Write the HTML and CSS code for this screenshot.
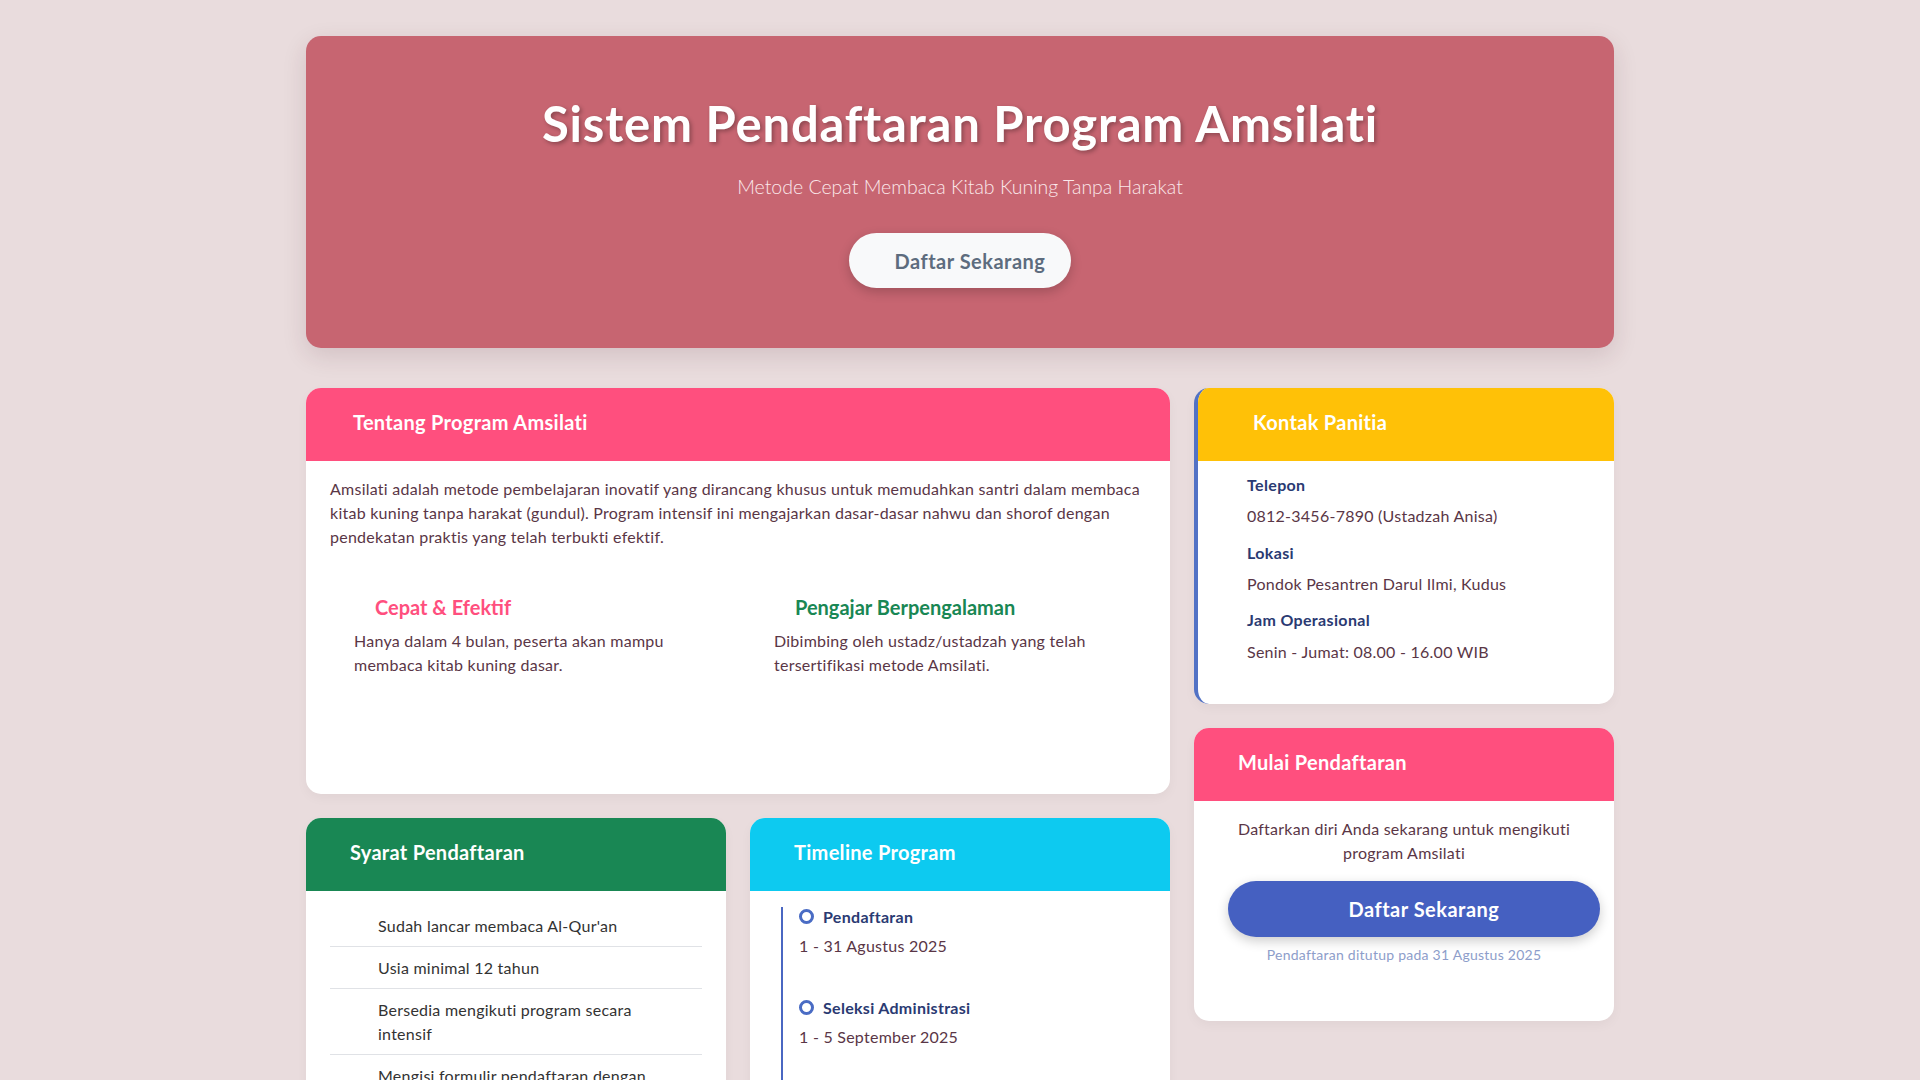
FILE: index.html
```html
<!DOCTYPE html>
<html lang="id">
<head>
<meta charset="utf-8">
<title>Sistem Pendaftaran Program Amsilati</title>
<link rel="stylesheet" href="styles.css">
</head>
<body>
<div class="page">
  <header class="hero">
    <h1 class="hero-title">Sistem Pendaftaran Program Amsilati</h1>
    <p class="hero-lead">Metode Cepat Membaca Kitab Kuning Tanpa Harakat</p>
    <a class="hero-btn" href="#daftar">Daftar Sekarang</a>
  </header>

  <main class="layout">
    <div class="col">
      <section class="card about">
        <h2 class="card-head head-pink head-about">Tentang Program Amsilati</h2>
        <div class="about-body">
          <p class="about-text">Amsilati adalah metode pembelajaran inovatif yang dirancang khusus untuk memudahkan santri dalam membaca kitab kuning tanpa harakat (gundul). Program intensif ini mengajarkan dasar-dasar nahwu dan shorof dengan pendekatan praktis yang telah terbukti efektif.</p>
          <div class="features">
            <div class="feature">
              <h3 class="feature-title pink">Cepat &amp; Efektif</h3>
              <p class="feature-text">Hanya dalam 4 bulan, peserta akan mampu membaca kitab kuning dasar.</p>
            </div>
            <div class="feature">
              <h3 class="feature-title green">Pengajar Berpengalaman</h3>
              <p class="feature-text">Dibimbing oleh ustadz/ustadzah yang telah tersertifikasi metode Amsilati.</p>
            </div>
          </div>
        </div>
      </section>

      <div class="pair">
        <section class="card">
          <h2 class="card-head head-green head-std">Syarat Pendaftaran</h2>
          <ul class="req-list">
            <li>Sudah lancar membaca Al-Qur'an</li>
            <li>Usia minimal 12 tahun</li>
            <li>Bersedia mengikuti program secara intensif</li>
            <li>Mengisi formulir pendaftaran dengan lengkap</li>
            <li>Membayar biaya pendaftaran</li>
          </ul>
        </section>
        <section class="card">
          <h2 class="card-head head-cyan head-std">Timeline Program</h2>
          <div class="tl-body">
            <ol class="timeline">
              <li class="tl-item">
                <div class="tl-title"><span class="tl-dot"></span>Pendaftaran</div>
                <div class="tl-date">1 - 31 Agustus 2025</div>
              </li>
              <li class="tl-item">
                <div class="tl-title"><span class="tl-dot"></span>Seleksi Administrasi</div>
                <div class="tl-date">1 - 5 September 2025</div>
              </li>
              <li class="tl-item">
                <div class="tl-title"><span class="tl-dot"></span>Pelaksanaan Program</div>
                <div class="tl-date">8 September - 31 Desember 2025</div>
              </li>
            </ol>
          </div>
        </section>
      </div>
    </div>

    <aside class="col">
      <section class="card contact">
        <h2 class="card-head head-yellow head-contact">Kontak Panitia</h2>
        <div class="contact-body">
          <div class="contact-item">
            <div class="contact-label">Telepon</div>
            <div class="contact-value">0812-3456-7890 (Ustadzah Anisa)</div>
          </div>
          <div class="contact-item">
            <div class="contact-label">Lokasi</div>
            <div class="contact-value">Pondok Pesantren Darul Ilmi, Kudus</div>
          </div>
          <div class="contact-item">
            <div class="contact-label">Jam Operasional</div>
            <div class="contact-value">Senin - Jumat: 08.00 - 16.00 WIB</div>
          </div>
        </div>
      </section>

      <section class="card" id="daftar">
        <h2 class="card-head head-pink head-std">Mulai Pendaftaran</h2>
        <div class="reg-body">
          <p class="reg-text">Daftarkan diri Anda sekarang untuk mengikuti program Amsilati</p>
          <a class="reg-btn" href="#daftar">Daftar Sekarang</a>
          <p class="reg-note">Pendaftaran ditutup pada 31 Agustus 2025</p>
        </div>
      </section>
    </aside>
  </main>
</div>
</body>
</html>
```

FILE: styles.css
```css
* { box-sizing: border-box; }

body {
  margin: 0;
  background: #e9dcdd;
  font-family: "Lato", sans-serif;
  font-size: 16px;
  line-height: 1.5;
  letter-spacing: 0.25px;
  color: #5a3646;
}

.page {
  width: 1308px;
  margin: 0 auto;
  padding: 36px 0 60px;
}

/* Hero */
.hero {
  display: flex;
  flex-direction: column;
  align-items: center;
  text-align: center;
  background: #c76571;
  border-radius: 15px;
  box-shadow: 0 8px 24px rgba(80, 30, 40, 0.14);
  padding: 62px 24px 60px;
  margin-bottom: 40px;
}

.hero-title {
  margin: 0 0 24px;
  font-size: 49px;
  line-height: 50px;
  font-weight: 700;
  letter-spacing: 0.8px;
  color: #fff;
  text-shadow: 2px 2px 4px rgba(0, 0, 0, 0.3);
}

.hero-lead {
  margin: 0 0 31px;
  font-size: 19.5px;
  line-height: 30px;
  font-weight: 300;
  letter-spacing: 0;
  color: #fbe8eb;
}

.hero-btn {
  display: inline-flex;
  align-items: center;
  height: 55px;
  padding: 0 26px 0 46px;
  border-radius: 28px;
  background: #f8f9fa;
  color: #5d6c7e;
  font-size: 20px;
  font-weight: 700;
  letter-spacing: 0.5px;
  text-decoration: none;
  box-shadow: 0 4px 12px rgba(0, 0, 0, 0.2);
}

/* Layout */
.layout {
  display: grid;
  grid-template-columns: 864px 420px;
  column-gap: 24px;
  align-items: start;
}

.col {
  display: flex;
  flex-direction: column;
  gap: 24px;
}

.pair {
  display: grid;
  grid-template-columns: 420px 420px;
  column-gap: 24px;
  align-items: start;
}

/* Cards */
.card {
  background: #fff;
  border-radius: 15px;
  overflow: hidden;
  box-shadow: 0 4px 12px rgba(0, 0, 0, 0.04);
}

.card-head {
  margin: 0;
  height: 73px;
  display: flex;
  align-items: center;
  padding-bottom: 5px;
  color: #fff;
  font-size: 20px;
  font-weight: 700;
  letter-spacing: 0.3px;
}

.head-std { padding-left: 44px; }
.head-about { padding-left: 47px; }
.head-contact { padding-left: 55px; }

.head-pink { background: #ff4f7e; }
.head-green { background: #198754; }
.head-cyan { background: #0dcaf0; }
.head-yellow { background: #ffc107; }

/* About */
.about-body {
  padding: 16px 24px 93px;
}

.about-text {
  margin: 0 0 22px;
}

.features {
  display: grid;
  grid-template-columns: 1fr 1fr;
  column-gap: 24px;
}

.feature {
  padding: 24px;
}

.feature-title {
  margin: 0 0 10px;
  padding-left: 21px;
  font-size: 20px;
  line-height: 24px;
  font-weight: 700;
  letter-spacing: 0;
}

.feature-title.pink { color: #ff4f7e; }
.feature-title.green { color: #198754; }

.feature-text { margin: 0; }

/* Requirements */
.req-list {
  list-style: none;
  margin: 0;
  padding: 14px 24px 24px;
}

.req-list li {
  padding: 8.5px 24px 8.5px 48px;
  border-bottom: 1px solid #e0e2e6;
  color: #333;
}

.req-list li:last-child { border-bottom: none; }

/* Timeline */
.tl-body {
  padding: 16px 24px 24px;
}

.timeline {
  list-style: none;
  margin: 0 0 0 7px;
  padding: 0 0 8px 16px;
  border-left: 2px solid #4a67c2;
}

.tl-item {
  margin-bottom: 40px;
}

.tl-title {
  display: flex;
  align-items: center;
  gap: 9px;
  font-weight: 700;
  line-height: 19px;
  letter-spacing: 0.3px;
  color: #2a3a72;
}

.tl-dot {
  width: 15px;
  height: 15px;
  border-radius: 50%;
  border: 3px solid #4a6cc4;
  background: #fff;
  flex: none;
}

.tl-date {
  margin-top: 8px;
}

/* Contact */
.contact {
  border-left: 4px solid #5272c5;
}

.contact-body {
  padding: 14px 24px 40px 49px;
}

.contact-item + .contact-item {
  margin-top: 14.5px;
}

.contact-label {
  font-weight: 700;
  line-height: 19.2px;
  letter-spacing: 0.35px;
  color: #2a3a72;
  margin-bottom: 10px;
}

/* Registration */
.reg-body {
  padding: 16px 24px 56px;
  text-align: center;
}

.reg-text {
  margin: 0 auto 16px;
  max-width: 350px;
}

.reg-btn {
  display: flex;
  align-items: center;
  justify-content: center;
  width: 372px;
  height: 56px;
  margin-left: 10px;
  padding-left: 20px;
  border-radius: 28px;
  background: #4560c1;
  color: #fff;
  font-size: 20px;
  font-weight: 700;
  letter-spacing: 0.5px;
  text-decoration: none;
  box-shadow: 0 4px 12px rgba(0, 0, 0, 0.2);
}

.reg-note {
  margin: 7.5px 0 0;
  font-size: 14px;
  line-height: 21px;
  color: #8d9dca;
}
```
